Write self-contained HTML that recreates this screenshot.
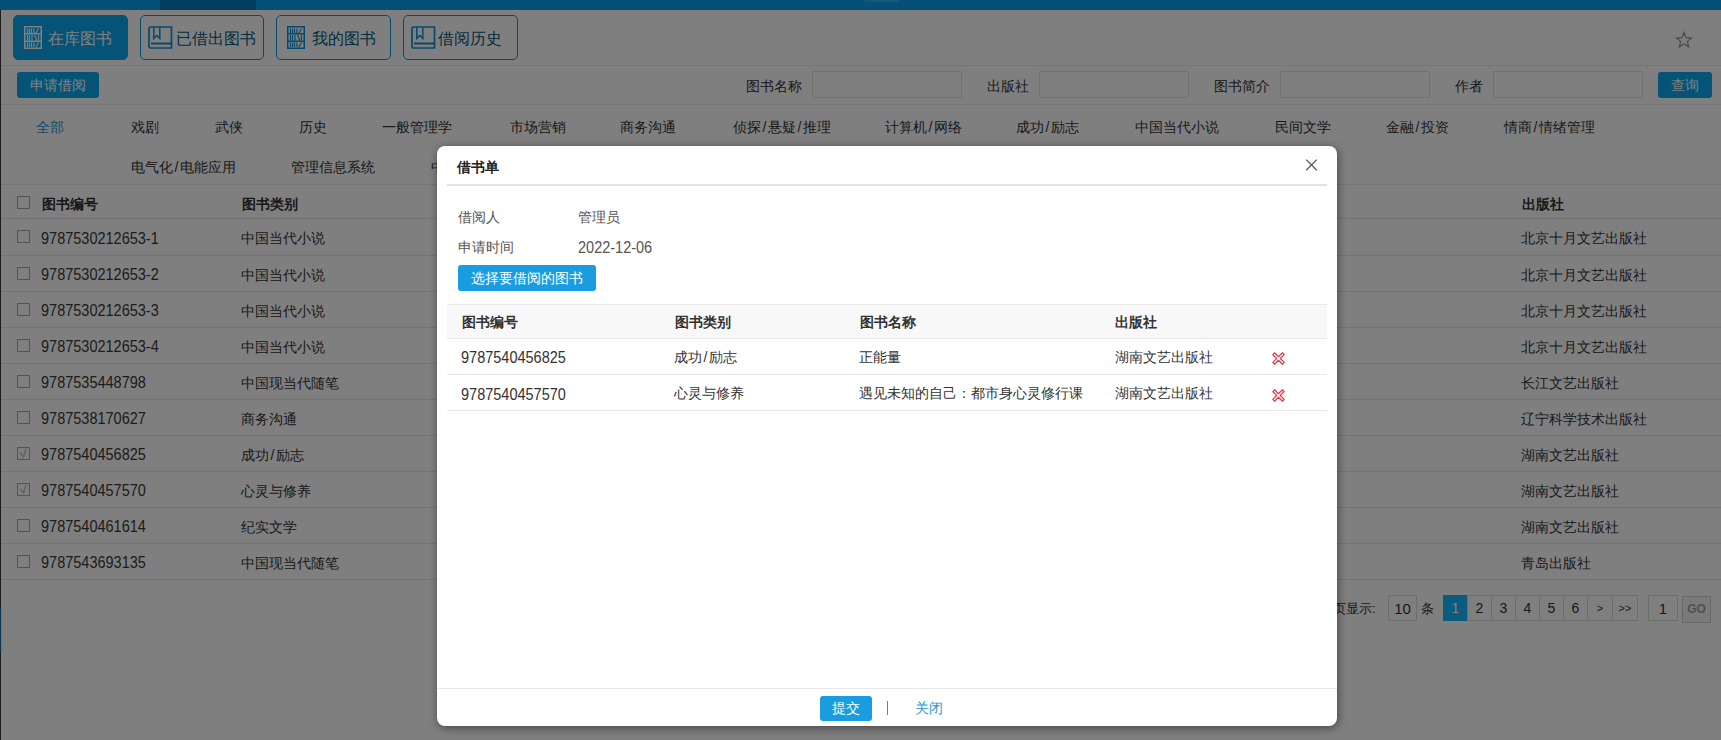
<!DOCTYPE html>
<html><head><meta charset="utf-8">
<style>
*{box-sizing:border-box;margin:0;padding:0}
html,body{width:1721px;height:740px;overflow:hidden;background:#fff;font-family:"Liberation Sans",sans-serif;color:#333;font-size:14px}
.a{position:absolute;white-space:nowrap}
#topbar{position:absolute;left:0;top:0;width:1721px;height:10px;background:#0a9ef0}
#topseg{position:absolute;left:160px;top:0;width:96px;height:10px;background:#087cbe}
#topseg2{position:absolute;left:865px;top:0;width:34px;height:2px;background:#2ab0f0}
#leftedge{position:absolute;left:0;top:10px;width:1px;height:730px;background:#3a3a3a}
#leftblue{position:absolute;left:0;top:608px;width:2px;height:43px;background:linear-gradient(90deg,#1a6aa0 0,#1a6aa0 1px,#d8ecf8 1px,#d8ecf8 2px)}
.tb{position:absolute;top:15px;height:45px;border:1px solid #0a96d8;border-radius:5px;color:#0a5a80;font-size:16px;line-height:43px}
.tb.on{background:#0aa8f0;border-color:#0aa8f0;color:#fff}
.tb span{position:absolute;top:0}
.hl{position:absolute;left:1px;width:1720px;height:1px;background:#eaeaea}
.btn{position:absolute;background:#0aa8f0;color:#fff;border-radius:3px;text-align:center}
.inp{position:absolute;top:71px;height:27px;width:150px;border:1px solid #e2e2e2;border-radius:2px;background:#fff}
.lb{position:absolute;top:76px;line-height:20px;font-size:14px;color:#333}
.cat{position:absolute;margin-top:1px;line-height:20px;font-size:14px;color:#333;white-space:nowrap}
.rl{position:absolute;left:1px;width:1720px;height:1px;background:#e6e6e6}
.c{position:absolute;white-space:nowrap;font-size:14px;line-height:20px;color:#333}
.num{color:#3a3a3a;font-size:14.5px;transform:scaleY(1.12);transform-origin:50% 60%}
.cb{position:absolute;left:17px;width:13px;height:13px;border:1px solid #a8a8a8;background:#fff}
.pg{position:absolute;top:595px;height:26px;border:1px solid #dadada;background:#fff;text-align:center;line-height:24px;font-size:14px;color:#333}
#overlay{position:absolute;left:0;top:0;width:1721px;height:740px;background:rgba(0,0,0,.5)}
#modal{position:absolute;left:437px;top:146px;width:900px;height:580px;background:#fff;border-radius:8px;box-shadow:1px 2px 10px rgba(0,0,0,.45)}
.m{position:absolute;white-space:nowrap;line-height:20px;font-size:14px}
.ml{position:absolute;left:10px;width:880px;height:1px;background:#e8e8e8}
</style></head><body>
<div id="topbar"></div><div id="topseg"></div><div id="topseg2"></div>
<div id="leftedge"></div><div id="leftblue"></div>

<!-- toolbar -->
<div class="tb on" style="left:13px;width:115px"><span style="left:34px;top:1px">在库图书</span></div>
<div class="tb" style="left:140px;width:124px"><span style="left:35px;top:1px">已借出图书</span></div>
<div class="tb" style="left:276px;width:115px"><span style="left:35px;top:1px">我的图书</span></div>
<div class="tb" style="left:403px;width:115px"><span style="left:34px;top:1px">借阅历史</span></div>
<svg class="a" style="left:24px;top:26px" width="18" height="23" viewBox="0 0 18 23"><g fill="none" stroke="#ffffff"><rect x="0.75" y="0.75" width="16.5" height="21.5" stroke-width="1.5"/><path d="M1 7.75H17M1 15.25H17" stroke-width="1.5"/><path d="M3.5 2.5V7M5.5 2.5V7M7.5 2.5V7M10 2.5V7M12 7L14.5 2.5M3.5 9V14.5M5.5 9V14.5M8 9V14.5M10.5 9L13 14.5M14.5 9V14.5M3.5 16.5V21M5.5 16.5V21M7.5 16.5V21M10 16.5V21M12 21L14.5 16.5" stroke-width="1.2"/></g></svg><svg class="a" style="left:148px;top:26px" width="25" height="23" viewBox="0 0 25 23"><g fill="none" stroke="#0a94dc"><path d="M2.5 1H23.5V22H2.5C1.7 22 1 21.3 1 20.5V2.5C1 1.7 1.7 1 2.5 1Z" stroke-width="1.7"/><path d="M3 17.5H23" stroke-width="2"/><path d="M5.8 1V12.5L8.8 9.5L11.8 12.5V1" stroke-width="1.5"/></g></svg><svg class="a" style="left:287px;top:26px" width="18" height="23" viewBox="0 0 18 23"><g fill="none" stroke="#0a94dc"><rect x="0.75" y="0.75" width="16.5" height="21.5" stroke-width="1.5"/><path d="M1 7.75H17M1 15.25H17" stroke-width="1.5"/><path d="M3.5 2.5V7M5.5 2.5V7M7.5 2.5V7M10 2.5V7M12 7L14.5 2.5M3.5 9V14.5M5.5 9V14.5M8 9V14.5M10.5 9L13 14.5M14.5 9V14.5M3.5 16.5V21M5.5 16.5V21M7.5 16.5V21M10 16.5V21M12 21L14.5 16.5" stroke-width="1.2"/></g></svg><svg class="a" style="left:411px;top:26px" width="25" height="23" viewBox="0 0 25 23"><g fill="none" stroke="#0a94dc"><path d="M2.5 1H23.5V22H2.5C1.7 22 1 21.3 1 20.5V2.5C1 1.7 1.7 1 2.5 1Z" stroke-width="1.7"/><path d="M3 17.5H23" stroke-width="2"/><path d="M5.8 1V12.5L8.8 9.5L11.8 12.5V1" stroke-width="1.5"/></g></svg>
<svg class="a" style="left:1675px;top:31px" width="18" height="18" viewBox="0 0 18 18"><path d="M9 1.5L11.1 6.6L16.5 7L12.4 10.5L13.7 15.9L9 13L4.3 15.9L5.6 10.5L1.5 7L6.9 6.6Z" fill="none" stroke="#9a9a9a" stroke-width="1.3" stroke-linejoin="miter"/></svg>
<div class="hl" style="top:65px"></div>

<!-- search row -->
<div class="btn" style="left:17px;top:72px;width:82px;height:26px;line-height:26px;font-size:14px">申请借阅</div>
<div class="lb" style="left:746px">图书名称</div><div class="inp" style="left:812px"></div>
<div class="lb" style="left:987px">出版社</div><div class="inp" style="left:1039px"></div>
<div class="lb" style="left:1214px">图书简介</div><div class="inp" style="left:1280px"></div>
<div class="lb" style="left:1455px">作者</div><div class="inp" style="left:1493px"></div>
<div class="btn" style="left:1658px;top:72px;width:54px;height:26px;line-height:26px;font-size:14px">查询</div>
<div class="hl" style="top:104px"></div>

<!-- categories -->
<div class="cat" style="left:36px;top:116px;color:#1a9ad6">全部</div>
<div class="cat" style="left:131px;top:116px">戏剧</div>
<div class="cat" style="left:215px;top:116px">武侠</div>
<div class="cat" style="left:299px;top:116px">历史</div>
<div class="cat" style="left:382px;top:116px">一般管理学</div>
<div class="cat" style="left:510px;top:116px">市场营销</div>
<div class="cat" style="left:620px;top:116px">商务沟通</div>
<div class="cat" style="left:733px;top:116px">侦探<span style="margin:0 1.5px">/</span>悬疑<span style="margin:0 1.5px">/</span>推理</div>
<div class="cat" style="left:885px;top:116px">计算机<span style="margin:0 1.5px">/</span>网络</div>
<div class="cat" style="left:1016px;top:116px">成功<span style="margin:0 1.5px">/</span>励志</div>
<div class="cat" style="left:1135px;top:116px">中国当代小说</div>
<div class="cat" style="left:1275px;top:116px">民间文学</div>
<div class="cat" style="left:1386px;top:116px">金融<span style="margin:0 1.5px">/</span>投资</div>
<div class="cat" style="left:1504px;top:116px">情商<span style="margin:0 1.5px">/</span>情绪管理</div>
<div class="cat" style="left:131px;top:156px">电气化<span style="margin:0 1.5px">/</span>电能应用</div>
<div class="cat" style="left:291px;top:156px">管理信息系统</div>
<div class="cat" style="left:431px;top:156px">中国现当代随笔</div>
<div class="hl" style="top:184px"></div>

<!-- table -->
<div class="cb" style="top:196px"></div>
<div class="c" style="left:42px;top:194px;font-weight:bold">图书编号</div>
<div class="c" style="left:242px;top:194px;font-weight:bold">图书类别</div>
<div class="c" style="left:1522px;top:194px;font-weight:bold">出版社</div>
<div class="rl" style="top:218px"></div>
<div class="cb" style="top:230px"></div>
<div class="c num" style="left:41px;top:229px">9787530212653-1</div>
<div class="c" style="left:241px;top:228px">中国当代小说</div>
<div class="c" style="left:1521px;top:228px">北京十月文艺出版社</div>
<div class="rl" style="top:255px"></div>
<div class="cb" style="top:267px"></div>
<div class="c num" style="left:41px;top:265px">9787530212653-2</div>
<div class="c" style="left:241px;top:265px">中国当代小说</div>
<div class="c" style="left:1521px;top:265px">北京十月文艺出版社</div>
<div class="rl" style="top:291px"></div>
<div class="cb" style="top:303px"></div>
<div class="c num" style="left:41px;top:301px">9787530212653-3</div>
<div class="c" style="left:241px;top:301px">中国当代小说</div>
<div class="c" style="left:1521px;top:301px">北京十月文艺出版社</div>
<div class="rl" style="top:327px"></div>
<div class="cb" style="top:339px"></div>
<div class="c num" style="left:41px;top:337px">9787530212653-4</div>
<div class="c" style="left:241px;top:337px">中国当代小说</div>
<div class="c" style="left:1521px;top:337px">北京十月文艺出版社</div>
<div class="rl" style="top:363px"></div>
<div class="cb" style="top:375px"></div>
<div class="c num" style="left:41px;top:373px">9787535448798</div>
<div class="c" style="left:241px;top:373px">中国现当代随笔</div>
<div class="c" style="left:1521px;top:373px">长江文艺出版社</div>
<div class="rl" style="top:399px"></div>
<div class="cb" style="top:411px"></div>
<div class="c num" style="left:41px;top:409px">9787538170627</div>
<div class="c" style="left:241px;top:409px">商务沟通</div>
<div class="c" style="left:1521px;top:409px">辽宁科学技术出版社</div>
<div class="rl" style="top:435px"></div>
<div class="cb" style="top:447px"></div>
<svg class="a" style="left:17px;top:447px" width="13" height="13" viewBox="0 0 13 13"><path d="M3 5.5L6.5 10L9 1.5" fill="none" stroke="#b0e0a0" stroke-width="1.6"/></svg>
<div class="c num" style="left:41px;top:445px">9787540456825</div>
<div class="c" style="left:241px;top:445px">成功<span style="margin:0 1.5px">/</span>励志</div>
<div class="c" style="left:1521px;top:445px">湖南文艺出版社</div>
<div class="rl" style="top:471px"></div>
<div class="cb" style="top:483px"></div>
<svg class="a" style="left:17px;top:483px" width="13" height="13" viewBox="0 0 13 13"><path d="M3 5.5L6.5 10L9 1.5" fill="none" stroke="#b0e0a0" stroke-width="1.6"/></svg>
<div class="c num" style="left:41px;top:481px">9787540457570</div>
<div class="c" style="left:241px;top:481px">心灵与修养</div>
<div class="c" style="left:1521px;top:481px">湖南文艺出版社</div>
<div class="rl" style="top:507px"></div>
<div class="cb" style="top:519px"></div>
<div class="c num" style="left:41px;top:517px">9787540461614</div>
<div class="c" style="left:241px;top:517px">纪实文学</div>
<div class="c" style="left:1521px;top:517px">湖南文艺出版社</div>
<div class="rl" style="top:543px"></div>
<div class="cb" style="top:555px"></div>
<div class="c num" style="left:41px;top:553px">9787543693135</div>
<div class="c" style="left:241px;top:553px">中国现当代随笔</div>
<div class="c" style="left:1521px;top:553px">青岛出版社</div>
<div class="rl" style="top:579px"></div>

<!-- pagination -->
<div class="c" style="left:1320px;top:599px;font-size:13px">每页显示:</div>
<div class="pg" style="left:1388px;width:29px;font-size:15px;line-height:26px">10</div>
<div class="c" style="left:1421px;top:599px;font-size:13px">条</div>
<div class="pg" style="left:1443px;width:25px;background:#14b8ff;border-color:#14b8ff;color:#fff">1</div>
<div class="pg" style="left:1467px;width:25px">2</div>
<div class="pg" style="left:1491px;width:25px">3</div>
<div class="pg" style="left:1515px;width:25px">4</div>
<div class="pg" style="left:1539px;width:25px">5</div>
<div class="pg" style="left:1563px;width:25px">6</div>
<div class="pg" style="left:1587px;width:26px;font-size:11px">&gt;</div>
<div class="pg" style="left:1612px;width:26px;font-size:11px">&gt;&gt;</div>
<div class="pg" style="left:1648px;width:30px;font-size:15px;line-height:26px">1</div>
<div class="pg" style="left:1682px;top:596px;width:29px;height:27px;color:#a0a0a0;font-size:12px;font-weight:bold;background:#f4f4f4;border-color:#d0d0d0">GO</div>

<div id="overlay"></div>
<div id="modal">
  <div class="m" style="left:20px;top:11px;font-weight:bold;color:#222">借书单</div>
  <svg class="a" style="left:868px;top:12px" width="14" height="14" viewBox="0 0 14 14"><path d="M1.2 1.6L11.8 12.2M11.8 1.6L1.2 12.2" stroke="#5a5a5a" stroke-width="1.3"/></svg>
  <div class="ml" style="top:38px;height:2px;background:#e2e2e2"></div>
  <div class="m" style="left:21px;top:61px;color:#555">借阅人</div>
  <div class="m" style="left:141px;top:61px;color:#555">管理员</div>
  <div class="m" style="left:21px;top:91px;color:#555">申请时间</div>
  <div class="m" style="left:141px;top:92px;color:#555;font-size:14.5px;transform:scaleY(1.12);transform-origin:50% 60%">2022-12-06</div>
  <div class="m" style="left:21px;top:119px;width:138px;height:26px;line-height:26px;background:#1a9de0;color:#fff;border-radius:3px;text-align:center">选择要借阅的图书</div>
  <div class="ml" style="top:158px"></div>
  <div class="a" style="left:10px;top:159px;width:880px;height:34px;background:#f8f8f8"></div>
  <div class="ml" style="top:192px"></div>
  <div class="ml" style="top:228px"></div>
  <div class="ml" style="top:264px"></div>
  <div class="m" style="left:25px;top:166px;font-weight:bold;color:#333">图书编号</div>
  <div class="m" style="left:238px;top:166px;font-weight:bold;color:#333">图书类别</div>
  <div class="m" style="left:423px;top:166px;font-weight:bold;color:#333">图书名称</div>
  <div class="m" style="left:678px;top:166px;font-weight:bold;color:#333">出版社</div>
  <div class="m" style="left:24px;top:202px;font-size:14.5px;transform:scaleY(1.12);transform-origin:50% 60%;color:#333">9787540456825</div>
  <div class="m" style="left:237px;top:201px;color:#333">成功<span style="margin:0 1.5px">/</span>励志</div>
  <div class="m" style="left:422px;top:201px;color:#333">正能量</div>
  <div class="m" style="left:678px;top:201px;color:#333">湖南文艺出版社</div>
  <div class="m" style="left:24px;top:239px;font-size:14.5px;transform:scaleY(1.12);transform-origin:50% 60%;color:#333">9787540457570</div>
  <div class="m" style="left:237px;top:237px;color:#333">心灵与修养</div>
  <div class="m" style="left:422px;top:237px;color:#333">遇见未知的自己：都市身心灵修行课</div>
  <div class="m" style="left:678px;top:237px;color:#333">湖南文艺出版社</div>
  <svg class="a" style="left:834px;top:205px" width="15" height="15" viewBox="0 0 15 15"><path d="M1.8 3.6L3.6 1.8L7.5 5.7L11.4 1.8L13.2 3.6L9.3 7.5L13.2 11.4L11.4 13.2L7.5 9.3L3.6 13.2L1.8 11.4L5.7 7.5Z" fill="none" stroke="#e33a48" stroke-width="1.25" stroke-linejoin="round"/></svg>
  <svg class="a" style="left:834px;top:242px" width="15" height="15" viewBox="0 0 15 15"><path d="M1.8 3.6L3.6 1.8L7.5 5.7L11.4 1.8L13.2 3.6L9.3 7.5L13.2 11.4L11.4 13.2L7.5 9.3L3.6 13.2L1.8 11.4L5.7 7.5Z" fill="none" stroke="#e33a48" stroke-width="1.25" stroke-linejoin="round"/></svg>
  <div class="ml" style="top:542px;left:0;width:900px"></div>
  <div class="m" style="left:383px;top:550px;width:52px;height:25px;line-height:25px;background:#1a9de0;color:#fff;border-radius:3px;text-align:center">提交</div>
  <div class="a" style="left:450px;top:555px;width:1px;height:14px;background:#3a8fc0"></div>
  <div class="m" style="left:478px;top:552px;color:#1a9ad6">关闭</div>
</div>
</body></html>
